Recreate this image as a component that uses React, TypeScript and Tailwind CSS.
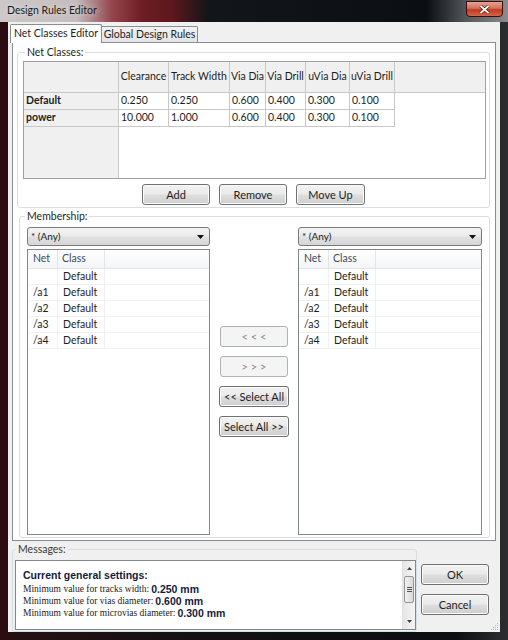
import React from "react";

const ui = "[font-family:Lato,'Noto_Sans',sans-serif]";

const columns = [
  { title: "Clearance", w: "w-[50px]" },
  { title: "Track Width", w: "w-[61px]" },
  { title: "Via Dia", w: "w-[36px]" },
  { title: "Via Drill", w: "w-[40px]" },
  { title: "uVia Dia", w: "w-[44px]" },
  { title: "uVia Drill", w: "w-[45px]" },
];

const classes = [
  { name: "Default", values: ["0.250", "0.250", "0.600", "0.400", "0.300", "0.100"] },
  { name: "power", values: ["10.000", "1.000", "0.600", "0.400", "0.300", "0.100"] },
];

const nets = [
  ["", "Default"],
  ["/a1", "Default"],
  ["/a2", "Default"],
  ["/a3", "Default"],
  ["/a4", "Default"],
];

const messages = [
  ["Minimum value for tracks width: ", "0.250 mm"],
  ["Minimum value for vias diameter: ", "0.600 mm"],
  ["Minimum value for microvias diameter: ", "0.300 mm"],
];

function Btn({ label, width, disabled = false }: { label: string; width: string; disabled?: boolean }) {
  return (
    <div
      className={`${width} h-[21px] flex items-center justify-center rounded-[3px] border text-[11px] leading-none whitespace-nowrap ${
        disabled
          ? "border-[#adb2b5] bg-[#f4f4f4] text-[#8d8d8d]"
          : "border-[#707070] bg-[linear-gradient(#f2f2f2_0%,#ebebeb_45%,#dddddd_55%,#cfcfcf_100%)] text-[#1e1e1e] shadow-[inset_0_0_0_1px_#fbfbfb]"
      }`}
    >
      {label}
    </div>
  );
}

function Combo() {
  return (
    <div className="h-[19px] flex items-center justify-between rounded-[3px] border border-[#7a7a7a] bg-[linear-gradient(#f3f3f3,#ececec_45%,#e0e0e0_55%,#d6d6d6)] pl-[3px] pr-[5px] text-[10px] text-[#1b1b1b]">
      <span>* (Any)</span>
      <svg width="7" height="4" viewBox="0 0 7 4">
        <path d="M0 0h7L3.5 4z" fill="#111" />
      </svg>
    </div>
  );
}

function NetList() {
  return (
    <div className="mt-[3px] h-[286px] border border-[#828790] bg-white text-[10.5px] text-[#1e1e1e]">
      <div className="flex h-[19px] border-b border-[#e5e5e5] bg-[linear-gradient(#ffffff,#f4f5f7)] text-[#3c4a5c]">
        <div className="w-[30px] pl-[5px] flex items-center border-r border-[#e5e5e5]">Net</div>
        <div className="w-[47px] pl-[4px] flex items-center border-r border-[#e5e5e5]">Class</div>
        <div className="flex-1" />
      </div>
      {nets.map(([n, c], i) => (
        <div key={i} className="flex h-[16px] border-b border-[#f0f0f0]">
          <div className="w-[30px] pl-[5px] flex items-center border-r border-[#f0f0f0]">{n}</div>
          <div className="w-[47px] pl-[5px] flex items-center border-r border-[#f0f0f0]">{c}</div>
        </div>
      ))}
    </div>
  );
}

function ClassGrid() {
  return (
    <div className="ml-[5px] mt-[2px] w-[463px] h-[118px] border border-[#a0a0a0] bg-white flex flex-col text-[10.5px] text-[#1e1e1e]">
      <div className="flex h-[31px] bg-[#f0f0f0] border-b border-[#c8c8c8]">
        <div className="w-[95px] border-r border-[#c8c8c8]" />
        {columns.map((c) => (
          <div key={c.title} className={`${c.w} flex items-center justify-center border-r border-[#c8c8c8] whitespace-nowrap`}>
            {c.title}
          </div>
        ))}
      </div>
      {classes.map((r) => (
        <div key={r.name} className="flex h-[17px]">
          <div className="w-[95px] pl-[2px] flex items-center bg-[#f0f0f0] border-r border-b border-[#c8c8c8] font-bold">
            {r.name}
          </div>
          {r.values.map((v, i) => (
            <div key={i} className={`${columns[i].w} pl-[2px] flex items-center border-r border-b border-[#c8c8c8]`}>
              {v}
            </div>
          ))}
        </div>
      ))}
      <div className="flex-1 flex">
        <div className="w-[95px] bg-[#f0f0f0] border-r border-[#c8c8c8]" />
      </div>
    </div>
  );
}

function VScroll() {
  return (
    <div className="w-[13px] flex flex-col bg-[linear-gradient(90deg,#e6e6e6,#f4f4f4)] border-l border-[#e0e0e0]">
      <div className="h-[15px] flex items-center justify-center">
        <svg width="5" height="3" viewBox="0 0 5 3">
          <path d="M2.5 0L5 3H0z" fill="#404040" />
        </svg>
      </div>
      <div className="h-[27px] mx-[1px] rounded-[2px] border border-[#959595] bg-[linear-gradient(90deg,#f2f2f2,#d9d9d9)] flex flex-col items-center justify-center gap-[1px]">
        <div className="w-[5px] h-px bg-[#555]" />
        <div className="w-[5px] h-px bg-[#555]" />
        <div className="w-[5px] h-px bg-[#555]" />
      </div>
      <div className="flex-1" />
      <div className="h-[16px] flex items-center justify-center">
        <svg width="5" height="3" viewBox="0 0 5 3">
          <path d="M0 0h5L2.5 3z" fill="#404040" />
        </svg>
      </div>
    </div>
  );
}

function TitleBar() {
  return (
    <div className="h-[22px] flex items-start bg-[linear-gradient(90deg,#cdc9c9_0%,#c4bcbc_15%,#94464d_22%,#6e1d23_28%,#5c181d_34%,#121519_41%,#0b0e12_84%,#56595d_92%,#8a8c8e_100%)]">
      <div className="pl-[7px] h-[22px] flex items-center text-[10.5px] text-[#1a1a1a] whitespace-nowrap [text-shadow:0_0_6px_#e8e8e8]">
        Design Rules Editor
      </div>
      <div className="ml-auto mr-[5px] mt-[1px] w-[37px] h-[16px] rounded-b-[4px] border border-[#3c0e08] bg-[linear-gradient(#e6a295_0%,#d2705c_45%,#c0391f_55%,#d4664a_100%)] flex items-center justify-center">
        <svg width="11" height="9" viewBox="0 0 11 9">
          <path d="M1.5 1L9.5 8M9.5 1L1.5 8" stroke="#4a1108" strokeWidth="3.2" />
          <path d="M1.5 1L9.5 8M9.5 1L1.5 8" stroke="#ffffff" strokeWidth="1.8" />
        </svg>
      </div>
    </div>
  );
}

export default function App() {
  return (
    <div
      className={`w-[508px] h-[640px] overflow-hidden flex flex-col bg-[linear-gradient(90deg,#2e0c10_0%,#241014_3%,#121013_40%,#0c0e11_90%,#2c2e31_100%)] ${ui}`}
    >
      <TitleBar />
      <div className="ml-[8px] w-[492px] h-[610px] bg-[#f0f0f0] flex flex-col">
        {/* tabs */}
        <div className="flex items-end pt-[2px] pl-[2px] text-[10.5px] text-[#1e1e1e] whitespace-nowrap">
          <div className="relative z-10 w-[92px] h-[19px] flex items-center justify-center border border-b-0 border-[#898c95] bg-white rounded-t-[2px]">
            Net Classes Editor
          </div>
          <div className="w-[96px] h-[17px] flex items-center justify-center border border-l-0 border-b-0 border-[#898c95] bg-[linear-gradient(#f2f2f2,#e3e3e3)] rounded-tr-[2px]">
            Global Design Rules
          </div>
        </div>

        {/* tab page */}
        <div className="-mt-[1px] ml-[4px] w-[484px] border border-[#898c95] bg-white pt-[2px] pb-[2px]">
          <fieldset className="ml-[4px] w-[473px] border border-[#d5dfe5] rounded-[3px] pb-[2px]">
            <legend className="ml-[7px] px-[2px] text-[10.5px] leading-[14px] text-[#1e1e1e]">Net Classes:</legend>
            <ClassGrid />
            <div className="mt-[5px] flex justify-center gap-[9px]">
              <Btn label="Add" width="w-[68px]" />
              <Btn label="Remove" width="w-[68px]" />
              <Btn label="Move Up" width="w-[69px]" />
            </div>
          </fieldset>

          <fieldset className="mt-[1px] ml-[6px] w-[471px] border border-[#d5dfe5] rounded-[3px] pb-[2px]">
            <legend className="ml-[5px] px-[2px] text-[10.5px] leading-[14px] text-[#1e1e1e]">Membership:</legend>
            <div className="ml-[7px] mt-[4px] flex">
              <div className="w-[183px] flex flex-col">
                <Combo />
                <NetList />
              </div>
              <div className="w-[88px] pt-[99px] flex flex-col items-center gap-[9px]">
                <Btn label="< < <" width="w-[68px]" disabled />
                <Btn label="> > >" width="w-[68px]" disabled />
                <Btn label="<< Select All" width="w-[70px]" />
                <Btn label="Select All >>" width="w-[70px]" />
              </div>
              <div className="w-[184px] flex flex-col">
                <Combo />
                <NetList />
              </div>
            </div>
          </fieldset>
        </div>

        {/* messages + OK/Cancel */}
        <div className="mt-[1px] flex">
          <fieldset className="ml-[4px] w-[405px] border border-[#d5dfe5] rounded-[3px] pb-[1px]">
            <legend className="ml-[3px] px-[2px] text-[10.5px] leading-[14px] text-[#3a3a3a]">Messages:</legend>
            <div className="mt-[4px] ml-[2px] w-[401px] h-[70px] border border-[#828790] bg-white flex">
              <div className="flex-1 pl-[7px] pt-[8px] text-[#141c3a]">
                <div className="h-[14px] flex items-center text-[10.5px] font-bold [font-family:'Liberation_Sans',Arial,sans-serif]">
                  Current general settings:
                </div>
                {messages.map(([t, v]) => (
                  <div key={t} className="h-[12px] flex items-center whitespace-nowrap leading-[12px]">
                    <span className="text-[9.5px] text-[#1a1a1a] [font-family:'Liberation_Serif','Times_New_Roman',serif]">{t}</span>
                    <span className="ml-[2px] text-[10.5px] font-bold [font-family:'Liberation_Sans',Arial,sans-serif]">{v}</span>
                  </div>
                ))}
              </div>
              <VScroll />
            </div>
          </fieldset>
          <div className="ml-[4px] mt-[22px] flex flex-col gap-[9px]">
            <Btn label="OK" width="w-[68px]" />
            <Btn label="Cancel" width="w-[68px]" />
          </div>
          <div className="flex-1 flex items-end justify-end pr-[1px] pb-[1px]">
            <svg width="8" height="8" viewBox="0 0 8 8">
              <rect x="6" y="0" width="1" height="1" fill="#b5b5b5" />
              <rect x="4" y="2" width="1" height="1" fill="#b5b5b5" />
              <rect x="6" y="2" width="1" height="1" fill="#b5b5b5" />
              <rect x="2" y="4" width="1" height="1" fill="#b5b5b5" />
              <rect x="4" y="4" width="1" height="1" fill="#b5b5b5" />
              <rect x="6" y="4" width="1" height="1" fill="#b5b5b5" />
              <rect x="0" y="6" width="1" height="1" fill="#b5b5b5" />
              <rect x="2" y="6" width="1" height="1" fill="#b5b5b5" />
              <rect x="4" y="6" width="1" height="1" fill="#b5b5b5" />
              <rect x="6" y="6" width="1" height="1" fill="#b5b5b5" />
            </svg>
          </div>
        </div>
      </div>
    </div>
  );
}
